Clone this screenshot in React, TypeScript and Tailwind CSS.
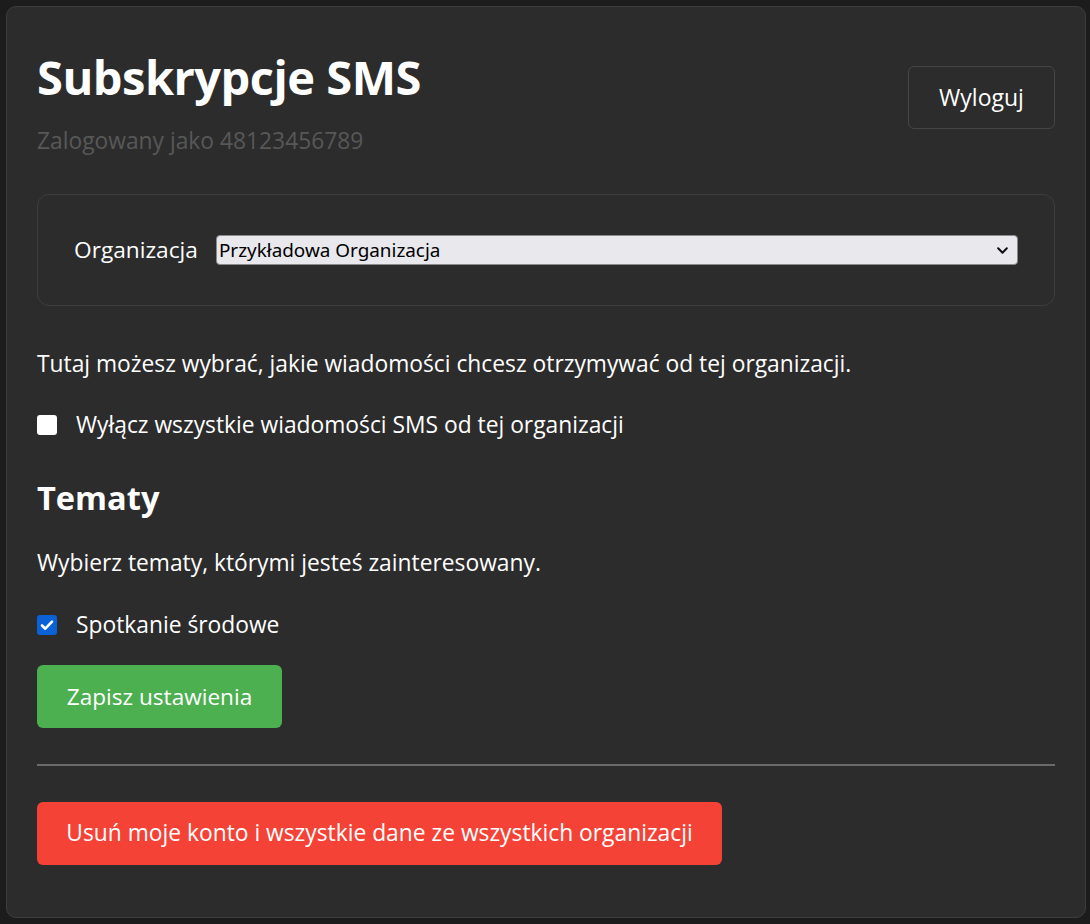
import { useState } from "react"

export default function App() {
  const [optOut, setOptOut] = useState(false)
  const [topic, setTopic] = useState(true)

  return (
    <div className="min-h-[924px] bg-[#1c1c1c] py-[6px] pr-[4px] pl-[6px] font-['Open_Sans',sans-serif] text-white">
      <div className="rounded-[10px] border border-[#3d3d3d] bg-[#2c2c2c] px-[30px] pt-[30px] pb-[52px]">
        {/* Header */}
        <div className="flex items-start justify-between">
          <div>
            <h1 className="mt-[12px] text-[47px] leading-[56px] font-bold tracking-[-0.5px]">Subskrypcje SMS</h1>
            <p className="mt-[21px] text-[22.8px] leading-[30px] text-[#585858]">Zalogowany jako 48123456789</p>
          </div>
          <button className="mt-[29px] h-[63px] w-[147px] rounded-[6px] border border-[#464646] text-[23px]">
            Wyloguj
          </button>
        </div>

        {/* Organization picker */}
        <div className="mt-[38px] flex h-[112px] items-center rounded-[12px] border border-[#3d3d3d] px-[36px]">
          <label className="mr-[18px] text-[22.7px]">Organizacja</label>
          <div className="relative flex h-[30px] flex-1 items-center rounded-[4px] border border-[#8a8a8a] bg-[#e9e8ed] pl-[2px] text-[18.9px] text-black">
            <span className="font-['Noto_Sans',sans-serif]">Przykładowa Organizacja</span>
            <svg className="absolute right-[8px] h-[13px] w-[13px]" viewBox="0 0 12 12" fill="none">
              <path d="M2 4l4 4 4-4" stroke="#111" strokeWidth="1.9" strokeLinecap="round" strokeLinejoin="round" />
            </svg>
          </div>
        </div>

        <p className="mt-[43px] text-[22.8px] leading-[30px]">
          Tutaj możesz wybrać, jakie wiadomości chcesz otrzymywać od tej organizacji.
        </p>

        <label className="mt-[31px] flex items-center gap-[19px] text-[22.8px] leading-[30px]">
          <span
            onClick={() => setOptOut(!optOut)}
            className="flex h-[20px] w-[20px] shrink-0 items-center justify-center rounded-[3px] bg-white"
          />
          Wyłącz wszystkie wiadomości SMS od tej organizacji
        </label>

        <h2 className="mt-[38px] text-[32.6px] leading-[40px] font-bold">Tematy</h2>

        <p className="mt-[30px] text-[22.8px] leading-[30px]">Wybierz tematy, którymi jesteś zainteresowany.</p>

        <label className="mt-[32px] flex items-center gap-[19px] text-[22.8px] leading-[30px]">
          <span
            onClick={() => setTopic(!topic)}
            className="flex h-[20px] w-[20px] shrink-0 items-center justify-center rounded-[3px] bg-[#0b62d6]"
          >
            {topic && (
              <svg viewBox="0 0 16 16" className="h-[16px] w-[16px]" fill="none">
                <path d="M3 8.5l3.3 3.2L13 4.6" stroke="white" strokeWidth="2.6" strokeLinecap="round" strokeLinejoin="round" />
              </svg>
            )}
          </span>
          Spotkanie środowe
        </label>

        <button className="mt-[25px] h-[63px] w-[245px] rounded-[6px] bg-[#4caf50] text-[22.6px]">
          Zapisz ustawienia
        </button>

        <hr className="mt-[36px] border-t-2 border-[#6a6a6a]" />

        <button className="mt-[36px] h-[63px] w-[685px] rounded-[6px] bg-[#f44336] text-[22.8px]">
          Usuń moje konto i wszystkie dane ze wszystkich organizacji
        </button>
      </div>
    </div>
  )
}
